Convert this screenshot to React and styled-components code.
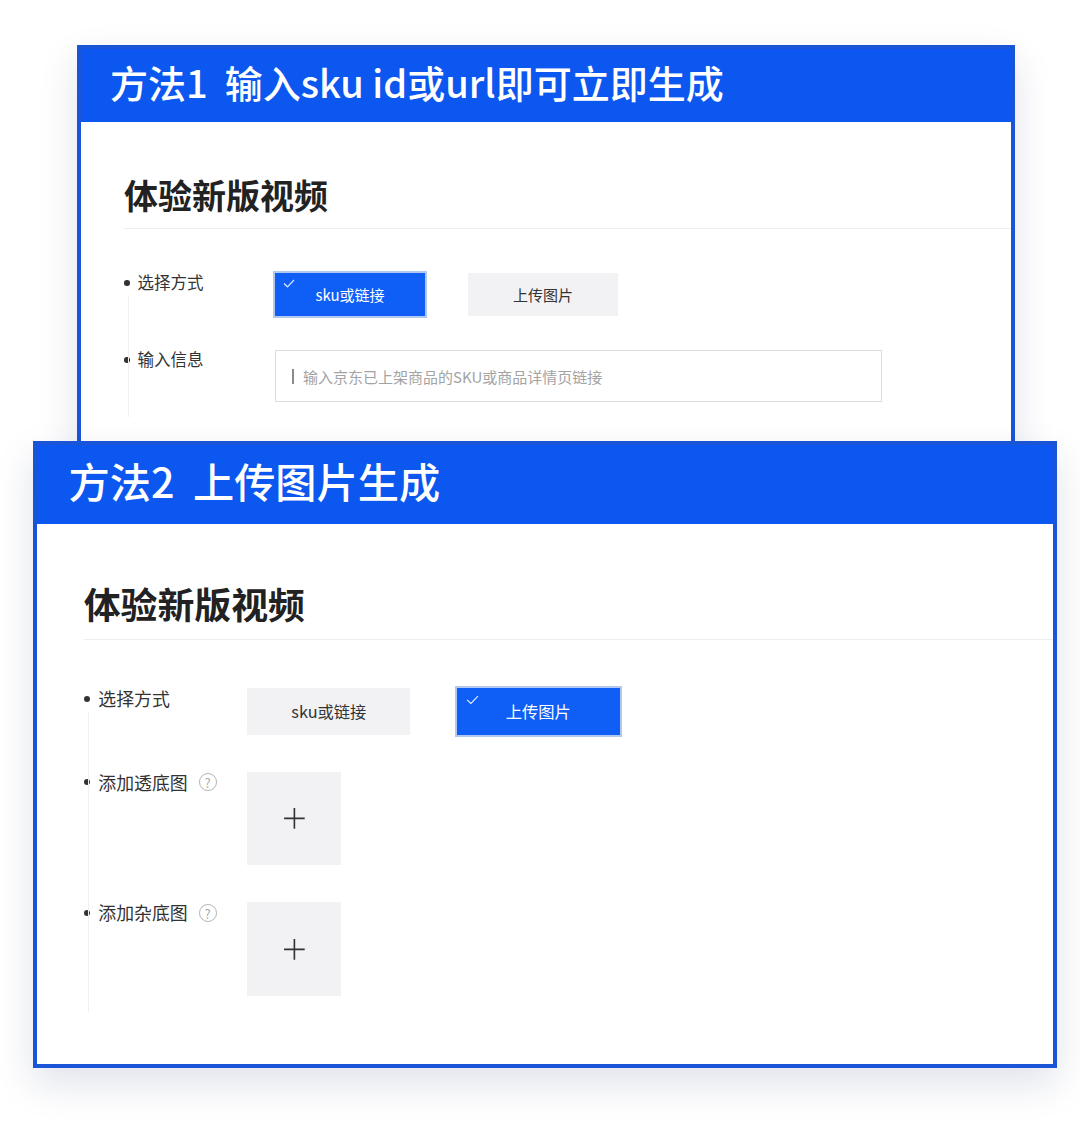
import React from 'react';
import styled, { createGlobalStyle, ThemeProvider } from 'styled-components';

const blue = '#0c57ef';
const frame = '#1a55d8';

// every size below is for the first card; the second card is drawn slightly larger
const px = n => p => `${(n * p.theme.s).toFixed(2)}px`;

const GlobalStyle = createGlobalStyle`
  html, body {
    margin: 0;
    padding: 0;
    background: #fff;
  }
  body {
    font-family: "Noto Sans CJK SC", "Noto Sans", sans-serif;
  }
`;

const Page = styled.div`
  width: 1080px;
  height: 1148px;
  padding-top: 45px;
  box-sizing: border-box;
  overflow: hidden;
  background: #fff;
`;

const Card = styled.section`
  box-sizing: border-box;
  margin-left: ${p => p.$left}px;
  width: ${p => p.$width}px;
  height: ${p => p.$height}px;
  border: 4px solid ${frame};
  border-bottom: ${p => (p.$cut ? 'none' : `4px solid ${frame}`)};
  background: #fff;
  box-shadow: 0 16px 36px rgba(25, 40, 100, 0.13);
  overflow: hidden;
  display: flex;
  flex-direction: column;
`;

const Header = styled.header`
  height: ${px(73)};
  flex-shrink: 0;
  display: flex;
  align-items: center;
  padding-left: ${px(29)};
  padding-bottom: ${px(9)};
  box-sizing: border-box;
  background: ${blue};
  color: #fff;
  font-size: ${px(38)};
  font-weight: 500;
  white-space: pre;
`;

const Body = styled.div`
  padding: ${px(53)} 0 0 ${px(43)};
`;

const Title = styled.h2`
  margin: 0;
  padding-bottom: ${px(14)};
  border-bottom: 1px solid #eceef2;
  font-size: ${px(34)};
  line-height: 1.15;
  font-weight: 700;
  color: #222;
`;

const Form = styled.div`
  position: relative;
  margin-top: ${px(44)};
  display: flex;
  flex-direction: column;
  gap: ${px(34)};

  &::before {
    content: '';
    position: absolute;
    left: ${px(4)};
    top: ${px(22)};
    bottom: ${px(-15)};
    border-left: 1px solid #f0f0f3;
  }
`;

const Row = styled.div`
  display: flex;
  align-items: flex-start;
`;

const Label = styled.div`
  width: ${px(151)};
  flex-shrink: 0;
  display: flex;
  align-items: center;
  font-size: ${px(16.5)};
  line-height: 1.2;
  color: #333;
`;

const Bullet = styled.span`
  flex-shrink: 0;
  width: ${px(5.5)};
  height: ${px(5.5)};
  border-radius: 50%;
  background: #333;
  margin-right: ${px(8)};
`;

const Help = styled.span`
  flex-shrink: 0;
  margin-left: ${px(10)};
  width: ${px(16.5)};
  height: ${px(16.5)};
  box-sizing: border-box;
  border: 1px solid #b4b4b4;
  border-radius: 50%;
  display: flex;
  align-items: center;
  justify-content: center;
  font-size: ${px(12)};
  line-height: 1;
  color: #aaa;
`;

const Options = styled.div`
  display: flex;
  gap: ${px(43)};
`;

const Option = styled.div`
  position: relative;
  width: ${px(150)};
  height: ${px(43)};
  display: flex;
  align-items: center;
  justify-content: center;
  font-size: ${px(15)};
  background: ${p => (p.$on ? '#0f5ef6' : '#f2f2f5')};
  color: ${p => (p.$on ? '#fff' : '#333')};
  outline: ${p => (p.$on ? '2px solid #b3c8ef' : 'none')};
`;

const Check = styled.svg`
  position: absolute;
  top: ${px(6)};
  left: ${px(8)};
  width: ${px(12)};
  height: ${px(9)};
`;

const Input = styled.div`
  width: ${px(607)};
  height: ${px(52)};
  box-sizing: border-box;
  border: 1px solid #dcdcdc;
  display: flex;
  align-items: center;
  padding-left: ${px(16)};
  font-size: ${px(15)};
  color: #a3a3a3;
`;

const Caret = styled.span`
  width: 2px;
  height: ${px(15)};
  background: #8a8a8a;
  margin-right: ${px(9)};
`;

const Upload = styled.div`
  width: ${px(86)};
  height: ${px(86.5)};
  background: #f2f2f5;
  display: flex;
  align-items: center;
  justify-content: center;
`;

const Plus = styled.svg`
  width: ${px(21)};
  height: ${px(21)};
`;

const CheckMark = () => (
  <Check viewBox="0 0 12 9">
    <polyline points="1,4.5 4.5,7.8 11,1" fill="none" stroke="rgba(255,255,255,0.85)" strokeWidth="1.2" />
  </Check>
);

const PlusMark = () => (
  <Plus viewBox="0 0 21 21">
    <path d="M10.5 1v19M1 10.5h19" stroke="#333" strokeWidth="1.5" fill="none" />
  </Plus>
);

const Choice = ({ on, children }) => (
  <Option $on={on}>
    {on && <CheckMark />}
    {children}
  </Option>
);

const FieldLabel = ({ children, help }) => (
  <Label>
    <Bullet />
    {children}
    {help && <Help>?</Help>}
  </Label>
);

const methods = [
  {
    key: 'sku',
    s: 1,
    left: 77,
    width: 938,
    height: 396,
    cut: true,
    title: '方法1  输入sku id或url即可立即生成',
  },
  {
    key: 'upload',
    s: 1.085,
    left: 33,
    width: 1024,
    height: 627,
    cut: false,
    title: '方法2  上传图片生成',
  },
];

const SkuFields = () => (
  <>
    <Row>
      <FieldLabel>选择方式</FieldLabel>
      <Options>
        <Choice on>sku或链接</Choice>
        <Choice>上传图片</Choice>
      </Options>
    </Row>
    <Row>
      <FieldLabel>输入信息</FieldLabel>
      <Input>
        <Caret />
        输入京东已上架商品的SKU或商品详情页链接
      </Input>
    </Row>
  </>
);

const UploadFields = () => (
  <>
    <Row>
      <FieldLabel>选择方式</FieldLabel>
      <Options>
        <Choice>sku或链接</Choice>
        <Choice on>上传图片</Choice>
      </Options>
    </Row>
    <Row>
      <FieldLabel help>添加透底图</FieldLabel>
      <Upload>
        <PlusMark />
      </Upload>
    </Row>
    <Row>
      <FieldLabel help>添加杂底图</FieldLabel>
      <Upload>
        <PlusMark />
      </Upload>
    </Row>
  </>
);

export default function App() {
  return (
    <Page>
      <GlobalStyle />
      {methods.map(m => (
        <ThemeProvider theme={{ s: m.s }} key={m.key}>
          <Card $left={m.left} $width={m.width} $height={m.height} $cut={m.cut}>
            <Header>{m.title}</Header>
            <Body>
              <Title>体验新版视频</Title>
              <Form>{m.key === 'sku' ? <SkuFields /> : <UploadFields />}</Form>
            </Body>
          </Card>
        </ThemeProvider>
      ))}
    </Page>
  );
}
